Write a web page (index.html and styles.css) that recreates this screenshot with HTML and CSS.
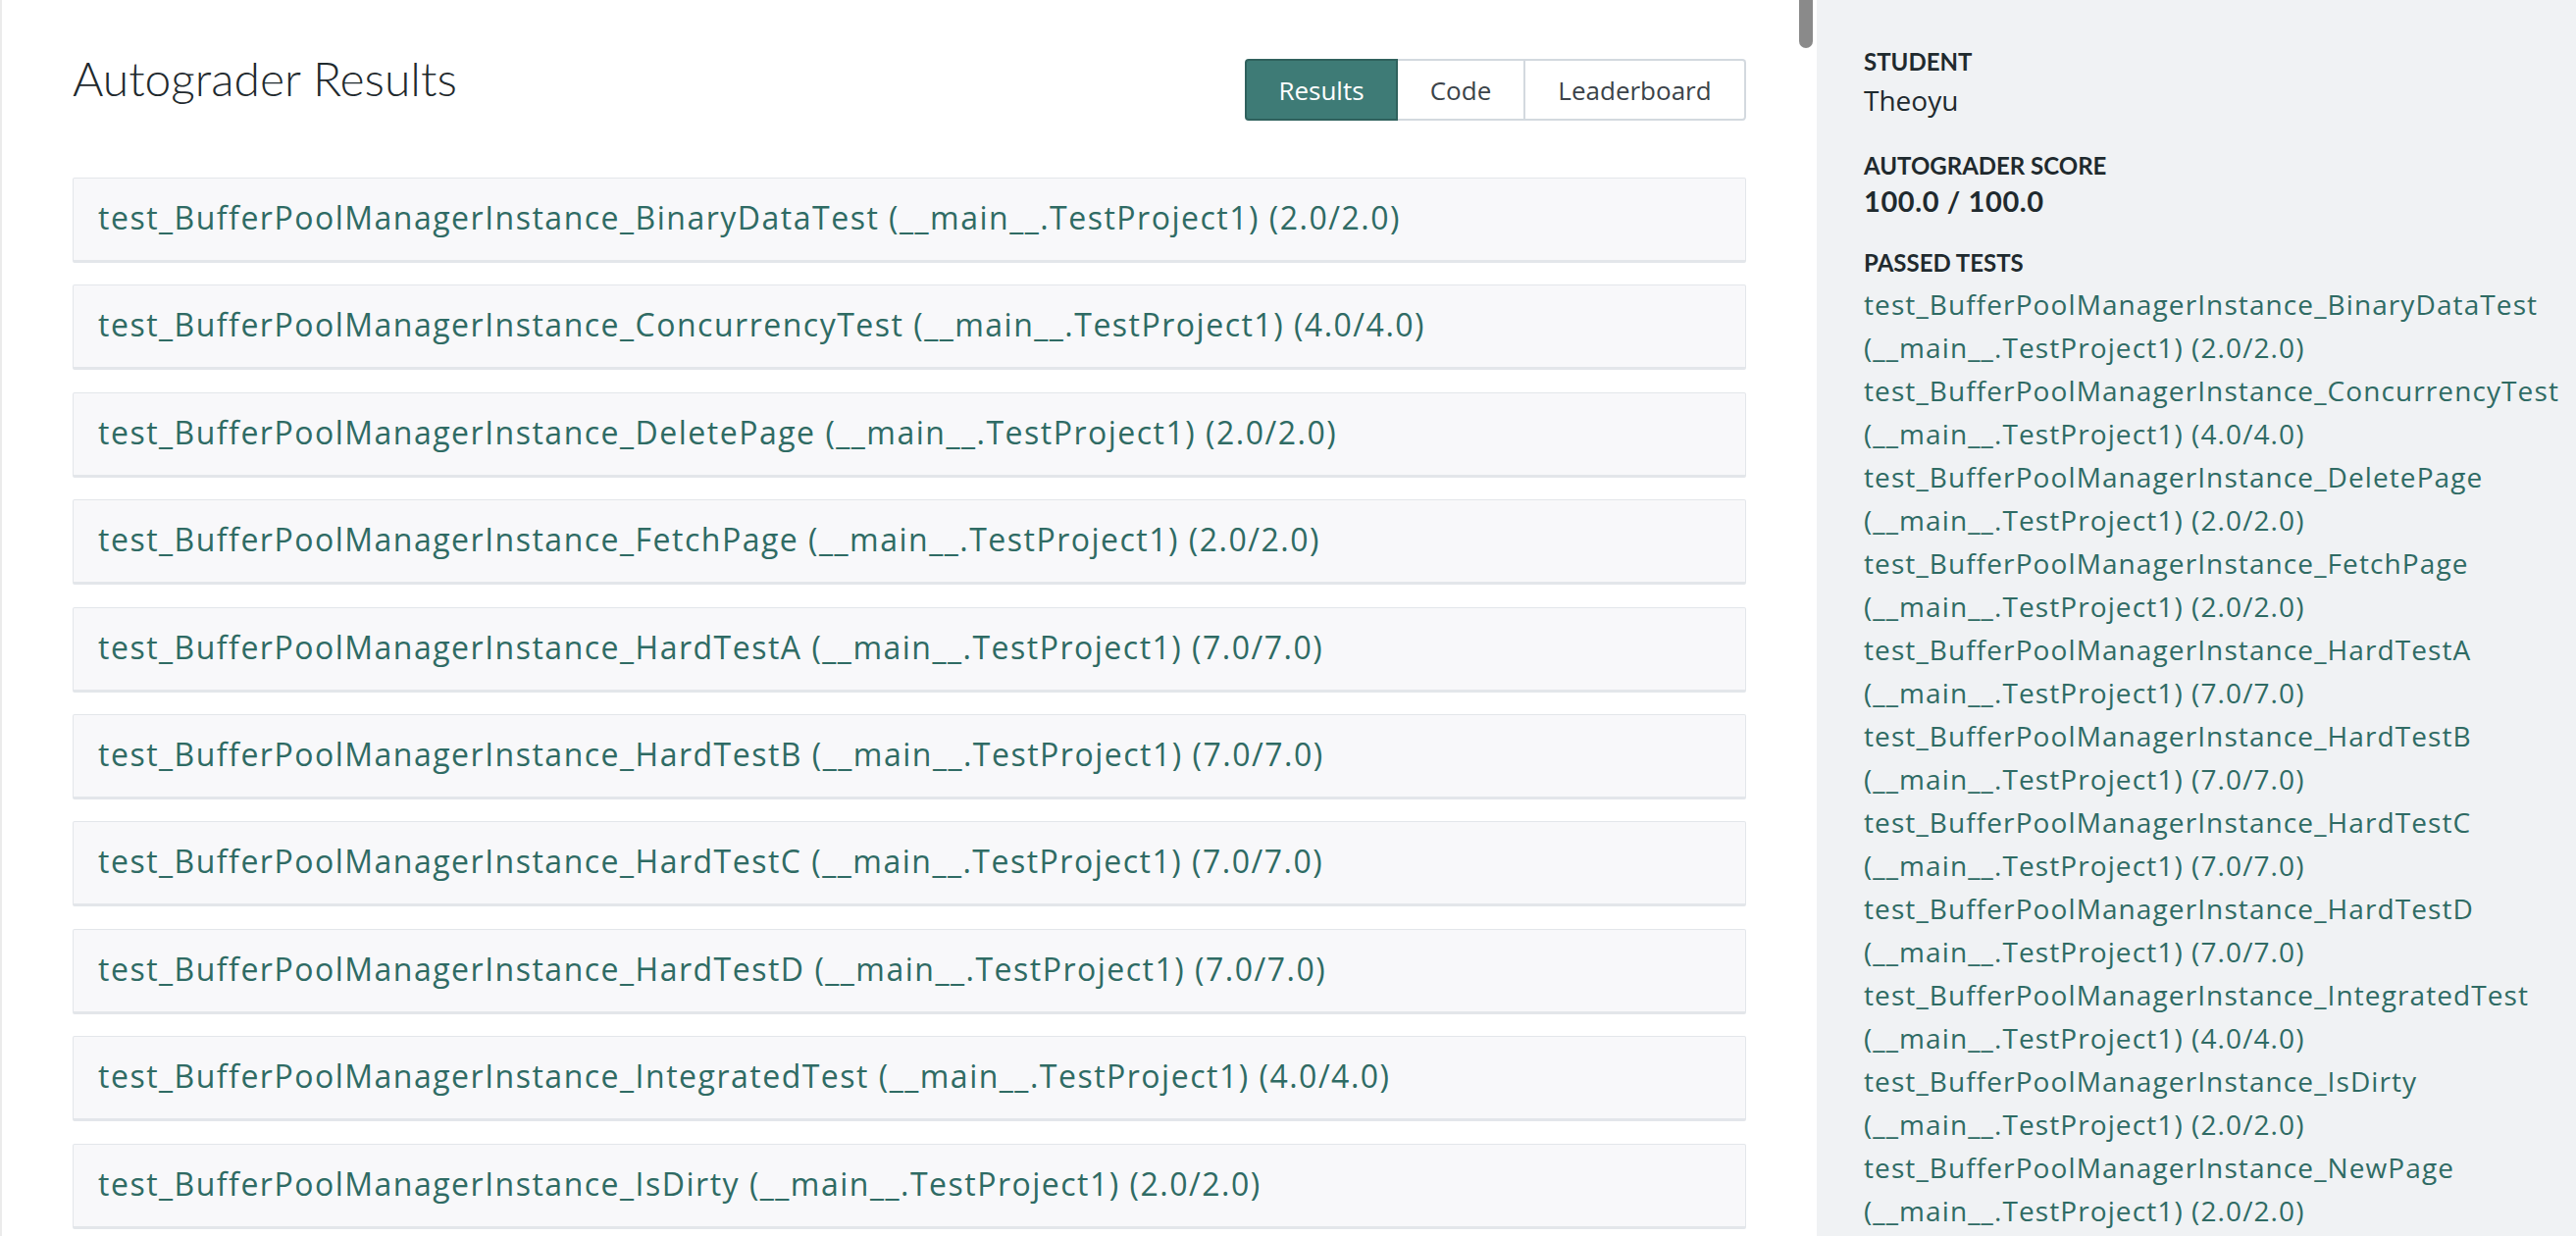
FILE: index.html
```html
<!DOCTYPE html>
<html lang="en">
<head>
<meta charset="utf-8">
<title>Autograder Results</title>
<link rel="stylesheet" href="styles.css">
</head>
<body>
<div class="page">
  <main class="main">
    <div class="scroll-thumb"></div>
    <header class="header">
      <h1 class="title">Autograder Results</h1>
      <nav class="tabs">
        <a class="tab tab-active">Results</a>
        <a class="tab">Code</a>
        <a class="tab">Leaderboard</a>
      </nav>
    </header>
    <section class="cards">
      <div class="card">test_BufferPoolManagerInstance_BinaryDataTest (__main__.TestProject1) (2.0/2.0)</div>
      <div class="card">test_BufferPoolManagerInstance_ConcurrencyTest (__main__.TestProject1) (4.0/4.0)</div>
      <div class="card">test_BufferPoolManagerInstance_DeletePage (__main__.TestProject1) (2.0/2.0)</div>
      <div class="card">test_BufferPoolManagerInstance_FetchPage (__main__.TestProject1) (2.0/2.0)</div>
      <div class="card">test_BufferPoolManagerInstance_HardTestA (__main__.TestProject1) (7.0/7.0)</div>
      <div class="card">test_BufferPoolManagerInstance_HardTestB (__main__.TestProject1) (7.0/7.0)</div>
      <div class="card">test_BufferPoolManagerInstance_HardTestC (__main__.TestProject1) (7.0/7.0)</div>
      <div class="card">test_BufferPoolManagerInstance_HardTestD (__main__.TestProject1) (7.0/7.0)</div>
      <div class="card">test_BufferPoolManagerInstance_IntegratedTest (__main__.TestProject1) (4.0/4.0)</div>
      <div class="card">test_BufferPoolManagerInstance_IsDirty (__main__.TestProject1) (2.0/2.0)</div>
    </section>
  </main>
  <aside class="sidebar">
    <div class="label">STUDENT</div>
    <div class="value">Theoyu</div>
    <div class="label label-score">AUTOGRADER SCORE</div>
    <div class="value value-bold">100.0 / 100.0</div>
    <div class="label label-tests">PASSED TESTS</div>
    <ul class="tests">
      <li>test_BufferPoolManagerInstance_BinaryDataTest (__main__.TestProject1) (2.0/2.0)</li>
      <li>test_BufferPoolManagerInstance_ConcurrencyTest (__main__.TestProject1) (4.0/4.0)</li>
      <li>test_BufferPoolManagerInstance_DeletePage (__main__.TestProject1) (2.0/2.0)</li>
      <li>test_BufferPoolManagerInstance_FetchPage (__main__.TestProject1) (2.0/2.0)</li>
      <li>test_BufferPoolManagerInstance_HardTestA (__main__.TestProject1) (7.0/7.0)</li>
      <li>test_BufferPoolManagerInstance_HardTestB (__main__.TestProject1) (7.0/7.0)</li>
      <li>test_BufferPoolManagerInstance_HardTestC (__main__.TestProject1) (7.0/7.0)</li>
      <li>test_BufferPoolManagerInstance_HardTestD (__main__.TestProject1) (7.0/7.0)</li>
      <li>test_BufferPoolManagerInstance_IntegratedTest (__main__.TestProject1) (4.0/4.0)</li>
      <li>test_BufferPoolManagerInstance_IsDirty (__main__.TestProject1) (2.0/2.0)</li>
      <li>test_BufferPoolManagerInstance_NewPage (__main__.TestProject1) (2.0/2.0)</li>
    </ul>
  </aside>
</div>
</body>
</html>
```

FILE: styles.css
```css
* { box-sizing: border-box; }

html, body {
  margin: 0;
  padding: 0;
  height: 100%;
  overflow: hidden;
  background: #ffffff;
  font-family: "Open Sans", "Lato", "Liberation Sans", sans-serif;
}

.page {
  display: flex;
  height: 1260px;
}

.main {
  position: relative;
  width: 1852px;
  flex: 0 0 1852px;
  height: 1260px;
  overflow: hidden;
  border-left: 2px solid #ebebeb;
  padding: 54px 72px 0 72px;
}

.scroll-thumb {
  position: absolute;
  top: 0;
  right: 4px;
  width: 14px;
  height: 49px;
  background: #8a8a8a;
  border-radius: 0 0 7px 7px;
}

.header {
  display: flex;
  justify-content: space-between;
  align-items: flex-start;
  margin-bottom: 58px;
}

.title {
  margin: 0;
  font-family: "Lato", "Open Sans", sans-serif;
  font-size: 48px;
  line-height: 52px;
  font-weight: 300;
  color: #1f2a2e;
}

.tabs {
  display: flex;
  margin-top: 6px;
  height: 63px;
}

.tab {
  display: flex;
  align-items: center;
  justify-content: center;
  font-size: 26px;
  color: #3b4349;
  background: #ffffff;
  border: 2px solid #d3d9df;
  border-left-width: 0;
}

.tab:nth-child(2) { width: 130px; }
.tab:nth-child(3) { width: 225px; border-radius: 0 4px 4px 0; }

.tab-active {
  width: 156px;
  background: #3e7b76;
  color: #ffffff;
  border: 2px solid #2f615d;
  border-radius: 4px 0 0 4px;
}

.cards {
  display: flex;
  flex-direction: column;
  gap: 22.4px;
}

.card {
  height: 87px;
  background: #f8f8fa;
  border: 1px solid #e3e6ea;
  border-bottom-width: 3px;
  border-radius: 2px;
  padding: 20px 25px 0 25px;
  font-size: 32px;
  line-height: 40px;
  letter-spacing: 1.5px;
  color: #2f6b64;
  white-space: nowrap;
}

.sidebar {
  flex: 1;
  background: #f0f2f4;
  padding: 48px 4px 0 48px;
  color: #1f2a2e;
}

.label {
  font-family: "Lato", "Open Sans", sans-serif;
  font-size: 24px;
  line-height: 30px;
  font-weight: 700;
}

.label-score { margin-top: 34px; }
.label-tests { margin-top: 30px; }

.value {
  margin-top: 6px;
  font-size: 28px;
  line-height: 36px;
}

.value-bold {
  margin-top: 3px;
  font-family: "Lato", "Open Sans", sans-serif;
  font-weight: 700;
  font-size: 29px;
  letter-spacing: 0.6px;
}

.tests {
  list-style: none;
  margin: 5px 0 0 0;
  padding: 0;
  font-size: 28px;
  line-height: 44px;
  letter-spacing: 1.1px;
  color: #2f6b64;
}
```
